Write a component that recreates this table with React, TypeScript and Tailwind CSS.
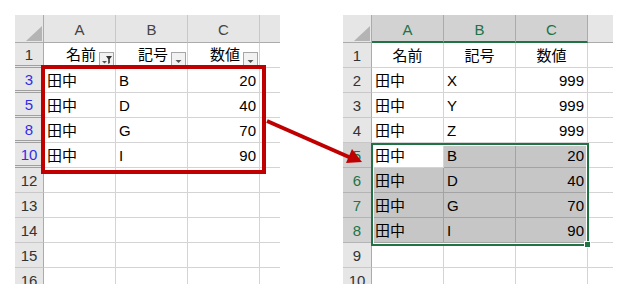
import React from "react";

type Cell = { t?: string; right?: boolean; center?: boolean; filter?: "funnel" | "plain"; sel?: boolean; active?: boolean };
type Row = { n: string; blue?: boolean; dbl?: boolean; sel?: boolean; cells: Cell[] };

const leftRows: Row[] = [
  { n: "1", dbl: true, cells: [{ t: "名前", filter: "funnel" }, { t: "記号", filter: "plain" }, { t: "数値", filter: "plain" }] },
  { n: "3", blue: true, dbl: true, cells: [{ t: "田中" }, { t: "B" }, { t: "20", right: true }] },
  { n: "5", blue: true, dbl: true, cells: [{ t: "田中" }, { t: "D" }, { t: "40", right: true }] },
  { n: "8", blue: true, dbl: true, cells: [{ t: "田中" }, { t: "G" }, { t: "70", right: true }] },
  { n: "10", blue: true, dbl: true, cells: [{ t: "田中" }, { t: "I" }, { t: "90", right: true }] },
  { n: "12", cells: [{}, {}, {}] },
  { n: "13", cells: [{}, {}, {}] },
  { n: "14", cells: [{}, {}, {}] },
  { n: "15", cells: [{}, {}, {}] },
  { n: "16", cells: [{}, {}, {}] },
];

const rightRows: Row[] = [
  { n: "1", cells: [{ t: "名前", center: true }, { t: "記号", center: true }, { t: "数値", center: true }] },
  { n: "2", cells: [{ t: "田中" }, { t: "X" }, { t: "999", right: true }] },
  { n: "3", cells: [{ t: "田中" }, { t: "Y" }, { t: "999", right: true }] },
  { n: "4", cells: [{ t: "田中" }, { t: "Z" }, { t: "999", right: true }] },
  { n: "5", sel: true, cells: [{ t: "田中", active: true }, { t: "B", sel: true }, { t: "20", right: true, sel: true }] },
  { n: "6", sel: true, cells: [{ t: "田中", sel: true }, { t: "D", sel: true }, { t: "40", right: true, sel: true }] },
  { n: "7", sel: true, cells: [{ t: "田中", sel: true }, { t: "G", sel: true }, { t: "70", right: true, sel: true }] },
  { n: "8", sel: true, cells: [{ t: "田中", sel: true }, { t: "I", sel: true }, { t: "90", right: true, sel: true }] },
  { n: "9", cells: [{}, {}, {}] },
  { n: "10", cells: [{}, {}, {}] },
];

const FilterButton = ({ funnel }: { funnel?: boolean }) => (
  <div className="w-[15px] h-[14px] border border-[#a6a6a6] bg-[#f2f2f2] self-end mb-[1px] shrink-0 relative">
    {funnel ? (
      <svg width="13" height="12" className="absolute left-0 top-0">
        <polygon points="2,8 7,8 4.5,10.5" fill="#555" />
        <polygon points="6,3 12,3 9.8,6 9.8,10 8.2,11 8.2,6" fill="#333" />
      </svg>
    ) : (
      <svg width="13" height="12" className="absolute left-0 top-0">
        <polygon points="3.5,7 9.5,7 6.5,10" fill="#555" />
      </svg>
    )}
  </div>
);

const Corner = () => (
  <div className="bg-[#e6e6e6] border-r border-b border-[#ababab] flex items-end justify-end pr-[1px] pb-[1px]">
    <svg width="16" height="15">
      <polygon points="16,0 16,15 0,15" fill="#b4b4b4" />
    </svg>
  </div>
);

function Sheet({ rows, right }: { rows: Row[]; right?: boolean }) {
  const cols = ["A", "B", "C"];
  return (
    <div
      className={
        right
          ? "grid grid-cols-[29px_72px_72px_72px_25px] grid-rows-[28px_repeat(10,25px)]"
          : "grid grid-cols-[29px_72px_72px_72px_20px] grid-rows-[28px_repeat(10,25px)]"
      }
    >
      <Corner />
      {cols.map((c) =>
        right ? (
          <div
            key={c}
            className="bg-[#d2d2d2] border-r border-r-[#ababab] border-b-2 border-b-[#217346] flex items-center justify-center pt-[4px] text-[#217346]"
          >
            {c}
          </div>
        ) : (
          <div
            key={c}
            className="bg-[#e6e6e6] border-r border-r-[#c8c8c8] border-b border-b-[#ababab] flex items-center justify-center pt-[4px] text-[#444]"
          >
            {c}
          </div>
        )
      )}
      <div className="bg-[#e6e6e6] border-b border-b-[#ababab]" />
      {rows.map((r) => (
        <React.Fragment key={r.n}>
          <div
            className={
              r.dbl
                ? "bg-[#e6e6e6] border-r border-r-[#ababab] border-b-[3px] border-double border-b-[#a0a0a0] flex items-center justify-center pt-[3px]"
                : r.sel
                ? "bg-[#d2d2d2] border-r border-r-[#ababab] border-b border-b-[#b4b4b4] flex items-center justify-center pt-[2px]"
                : "bg-[#e6e6e6] border-r border-r-[#ababab] border-b border-b-[#c8c8c8] flex items-center justify-center pt-[2px]"
            }
          >
            <span className={r.blue ? "text-[#2f2fe8]" : r.sel ? "text-[#217346]" : "text-[#333]"}>{r.n}</span>
          </div>
          {r.cells.map((c, i) => (
            <div
              key={i}
              className={
                (c.sel
                  ? "bg-[#c6c6c6] border-r border-b border-[#a3a3a3] "
                  : "bg-white border-r border-b border-[#d4d4d4] ") +
                (c.right
                  ? "flex items-center justify-end px-[3px] pt-[2px]"
                  : c.center
                  ? "flex items-center justify-center px-[3px] pt-[2px]"
                  : c.filter
                  ? "flex items-center justify-end gap-[3px] pr-[1px] pt-[1px]"
                  : "flex items-center px-[3px] pt-[2px]")
              }
            >
              {c.t}
              {c.filter && <FilterButton funnel={c.filter === "funnel"} />}
            </div>
          ))}
          <div className="bg-white border-b border-[#d4d4d4]" />
        </React.Fragment>
      ))}
    </div>
  );
}

export default function App() {
  return (
    <div className="relative w-[627px] h-[308px] bg-white overflow-hidden text-[15px] text-black font-['Liberation_Sans','Noto_Sans_CJK_JP',sans-serif]">
      <div className="flex pt-[15px] pl-[15px] gap-[63px]">
        {/* left: filtered sheet */}
        <div className="relative h-[269px] overflow-hidden">
          <Sheet rows={leftRows} />
          <div className="absolute left-[26px] top-[50px] w-[225px] h-[109px] border-4 border-[#c00000]" />
        </div>
        {/* right: pasted result */}
        <div className="relative h-[269px] overflow-hidden">
          <Sheet rows={rightRows} right />
          <div className="absolute left-[28px] top-[128px] w-[218px] h-[103px] border-2 border-[#217346]">
            <div className="w-full h-full border border-white" />
          </div>
          <div className="absolute left-[241px] top-[226px] w-[7px] h-[7px] bg-[#217346] border border-white" />
        </div>
      </div>
      <svg className="absolute left-0 top-0" width="627" height="308">
        <line x1="267" y1="121" x2="350" y2="157.5" stroke="#c00000" strokeWidth="4" />
        <polygon points="362,162 346,163 352,149" fill="#c00000" />
      </svg>
    </div>
  );
}
